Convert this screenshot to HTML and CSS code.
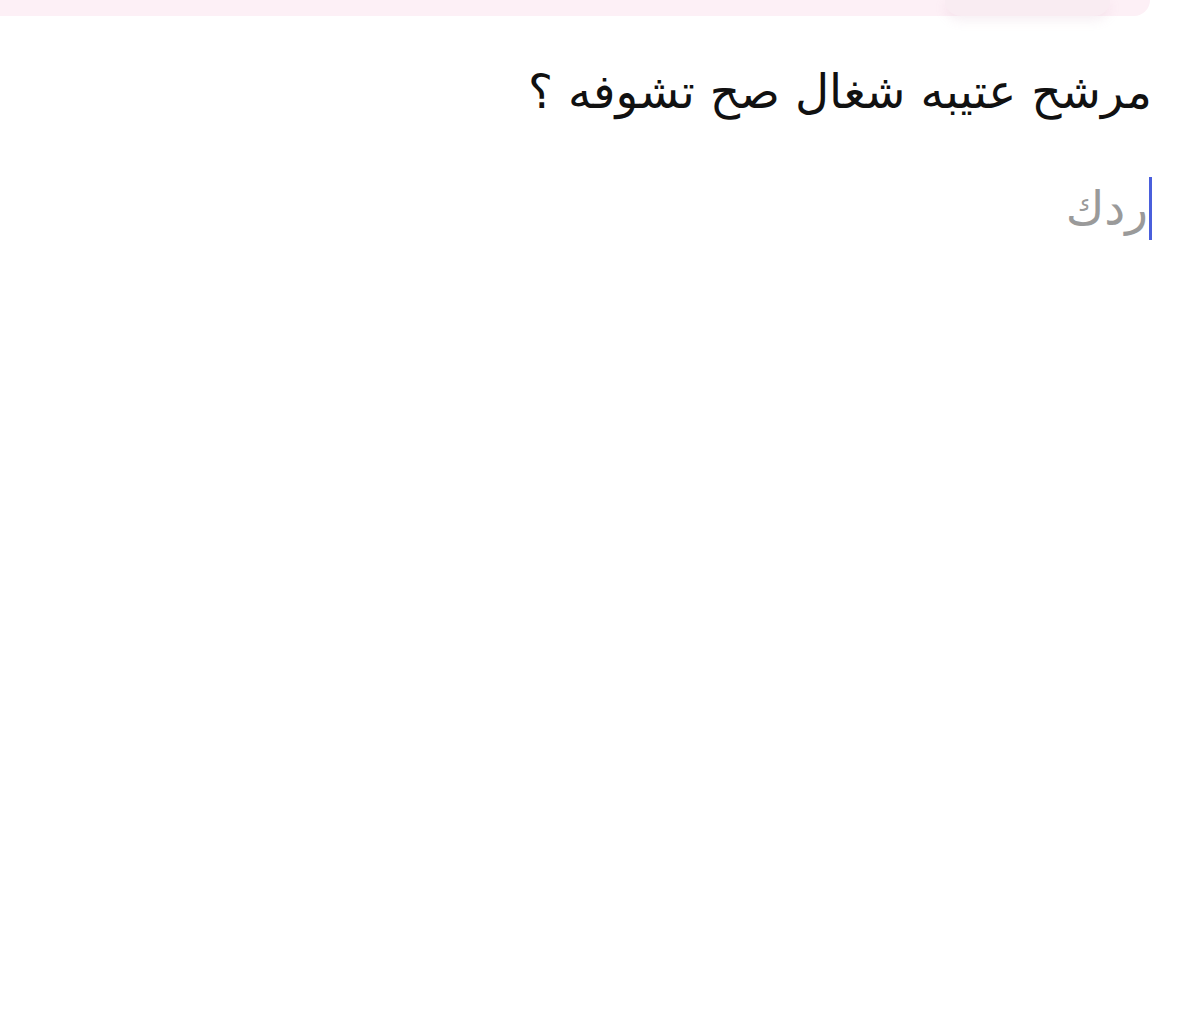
FILE: index.html
```html
<!DOCTYPE html>
<html lang="ar" dir="rtl">
<head>
<meta charset="utf-8">
<link rel="stylesheet" href="styles.css">
</head>
<body>
<div class="topbar"><div class="pill"></div></div>
<main class="content">
  <h1 class="title">مرشح عتيبه شغال صح تشوفه ؟</h1>
  <div class="reply"><span class="caret"></span><span class="placeholder">ردك</span></div>
</main>
</body>
</html>
```
FILE: styles.css
```css
html, body {
  margin: 0;
  padding: 0;
  background: #ffffff;
}
body {
  width: 1200px;
  height: 1019px;
  overflow: hidden;
  font-family: "DejaVu Sans", "Noto Sans", sans-serif;
}
.topbar {
  height: 16px;
  margin-right: 50px;
  margin-left: 0;
  background: #fdf0f6;
  border-bottom-right-radius: 16px;
  display: flex;
  justify-content: flex-start;
  padding-right: 40px;
}
.pill {
  width: 165px;
  height: 16px;
  border-radius: 0 0 40px 40px;
  background: #f9ecf2;
  box-shadow: 0 4px 12px rgba(200, 150, 180, 0.16);
}
.content {
  padding: 0 48px 0 0;
}
.title {
  margin: 44px 0 0 0;
  font-weight: normal;
  font-size: 47px;
  line-height: 64px;
  color: #111111;
  text-align: right;
}
.reply {
  margin-top: 52px;
  display: flex;
  align-items: center;
  height: 64px;
}
.caret {
  width: 3px;
  height: 63px;
  background: #4a5fdc;
  margin-left: 1px;
}
.placeholder {
  font-size: 47px;
  color: #9a9a9a;
  line-height: 60px;
  position: relative;
  top: 1px;
}
```
